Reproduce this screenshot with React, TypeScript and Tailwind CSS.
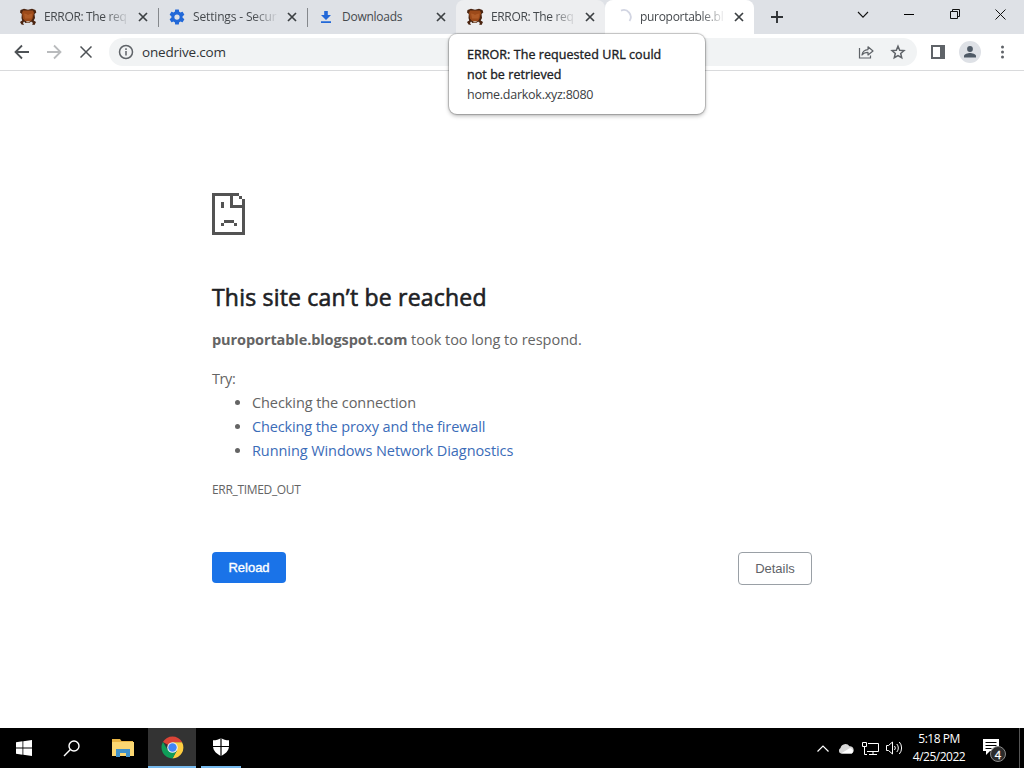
import { type ReactNode } from 'react';
import clsx from 'clsx';

interface Tab {
  title: string;
  icon: ReactNode;
  state?: 'hover' | 'active';
  separator?: boolean;
  fade?: boolean;
  titleClass: string;
}

const SquidIcon = () => (
  <svg width="18" height="18" viewBox="0 0 18 18">
    <path d="M1.500 2L5 .8l4 1 4-1L16.500 2l.8 2.500-1.800 1.500.5 4-1.300 2.500 2.300 1.500-1.500 3-2.500-.5 1-1.500-2-1.500-1.500 1.500h-4L5 13.500 4 15l1 2-2.500-.5-1.500-2.500 2.200-1.500L2.500 10l.3-4L1 4.500z" fill="#4a2410" />
    <path d="M4 2.500h10l1 2.500-1.500 5.500L12 13H6l-2-2.500L3 5z" fill="#9c4a1a" />
    <path d="M5 5.500l2.500.5L9 7l2-1 2.500-.5-1 5H6z" fill="#b05c28" />
    <path d="M7.300 13.800h3.400" stroke="#ead0ba" strokeWidth="1.200" />
  </svg>
);

const GearIcon = () => (
  <svg width="18" height="18" viewBox="0 0 24 24" fill="#2268d8">
    <path d="M19.430 12.980c.04-.32.07-.64.07-.98s-.03-.66-.07-.98l2.110-1.650c.19-.15.24-.42.12-.64l-2-3.460c-.12-.22-.39-.3-.61-.22l-2.490 1c-.52-.4-1.080-.73-1.690-.98l-.38-2.650C14.460 2.180 14.250 2 14 2h-4c-.25 0-.46.18-.49.42l-.38 2.650c-.61.25-1.170.59-1.690.98l-2.490-1c-.23-.09-.49 0-.61.22l-2 3.460c-.13.22-.07.49.12.64l2.110 1.650c-.04.32-.07.65-.07.98s.03.66.07.98l-2.110 1.650c-.19.15-.24.42-.12.64l2 3.460c.12.22.39.3.61.22l2.490-1c.52.4 1.080.73 1.690.98l.38 2.650c.03.24.24.42.49.42h4c.25 0 .46-.18.49-.42l.38-2.650c.61-.25 1.170-.59 1.690-.98l2.490 1c.23.09.49 0 .61-.22l2-3.460c.12-.22.07-.49-.12-.64zM12 15.500A3.500 3.500 0 1 1 12 8.500a3.500 3.500 0 0 1 0 7z" />
  </svg>
);

const DownloadIcon = () => (
  <svg width="18" height="18" viewBox="0 0 18 18" fill="#2268d8">
    <path d="M7.200 3h3.600v4h3.200l-5 5-5-5h3.200zM4 13.300h10v1.700H4z" />
  </svg>
);

const Spinner = () => (
  <svg width="18" height="18" viewBox="0 0 18 18" fill="none" stroke="#d2d5e2" strokeWidth="1.800">
    <path d="M6 2.600A7 7 0 0 1 14.500 13" />
  </svg>
);

const TABS: Tab[] = [
  { title: 'ERROR: The req', icon: <SquidIcon />, separator: true, fade: true, titleClass: 'tracking-[-0.35px]' },
  { title: 'Settings - Secur', icon: <GearIcon />, separator: true, fade: true, titleClass: 'tracking-[-0.15px]' },
  { title: 'Downloads', icon: <DownloadIcon />, titleClass: 'tracking-[-0.25px]' },
  { title: 'ERROR: The req', icon: <SquidIcon />, state: 'hover', fade: true, titleClass: 'tracking-[-0.35px]' },
  { title: 'puroportable.bl', icon: <Spinner />, state: 'active', fade: true, titleClass: 'tracking-[-0.3px]' },
];

const TabItem = ({ tab }: { tab: Tab }) => (
  <div
    className={clsx(
      'relative flex h-[34px] w-[149px] shrink-0 items-center pl-[10px] text-[#45494d]',
      tab.state === 'hover' && 'rounded-t-lg bg-[#edeef0]',
      tab.state === 'active' && 'rounded-t-lg bg-white'
    )}
  >
    <span className="flex w-[25px] shrink-0">{tab.icon}</span>
    <span
      className={clsx(
        'w-[85px] shrink-0 whitespace-nowrap text-[12px] leading-[18px]',
        tab.fade && '[mask-image:linear-gradient(to_right,#000_60px,transparent_86px)]',
        tab.titleClass
      )}
    >
      {tab.title}
    </span>
    <svg className="ml-[9px] shrink-0" width="10" height="10" viewBox="0 0 10 10" stroke="#3c4043" strokeWidth="1.700">
      <path d="M1 1l8 8M9 1l-8 8" />
    </svg>
    {tab.separator && <span className="absolute -right-px top-[8px] h-[19px] w-px bg-[#85888c]" />}
  </div>
);

const TabStrip = () => (
  <div className="flex h-[34px] bg-[#dee1e6] pl-[9px]">
    {TABS.map((tab, i) => (
      <TabItem key={i} tab={tab} />
    ))}
    <div className="flex w-[46px] items-center justify-center">
      <svg width="12" height="12" viewBox="0 0 12 12" stroke="#2f3235" strokeWidth="1.900">
        <path d="M6 0v12M0 6h12" />
      </svg>
    </div>
    <div className="ml-auto flex h-[29px] shrink-0 text-[#111]">
      <div className="flex w-[46px] items-center justify-center">
        <svg width="12" height="8" viewBox="0 0 12 8" fill="none" stroke="currentColor" strokeWidth="1.100">
          <path d="M1 1l5 5.200L11 1" />
        </svg>
      </div>
      <div className="flex w-[46px] items-center justify-center">
        <span className="h-px w-[10px] bg-black" />
      </div>
      <div className="flex w-[46px] items-center justify-center pr-px">
        <svg width="10" height="11" viewBox="0 0 10 11" fill="none" stroke="currentColor">
          <path d="M.5 2.500h7v7h-7zM2.500 2.500v-2h7v7h-2" />
        </svg>
      </div>
      <div className="flex w-[46px] items-center justify-center pr-px pb-px">
        <svg width="11" height="11" viewBox="0 0 11 11" stroke="currentColor">
          <path d="M.5.5l10 10M10.500.5l-10 10" />
        </svg>
      </div>
    </div>
  </div>
);

const Toolbar = () => (
  <div className="flex h-[37px] items-center border-b border-[#d9dadc] bg-white text-[#5f6368]">
    <svg className="ml-[14px]" width="16" height="16" viewBox="0 0 16 16" fill="none" stroke="#4e5256" strokeWidth="1.800">
      <path d="M15 8H2M8 1.500L1.500 8 8 14.500" />
    </svg>
    <svg className="ml-[16px]" width="16" height="16" viewBox="0 0 16 16" fill="none" stroke="#b9bbbd" strokeWidth="1.800">
      <path d="M1 8h13M8 1.500L14.500 8 8 14.500" />
    </svg>
    <svg className="ml-[18px]" width="12" height="12" viewBox="0 0 12 12" stroke="#4e5256" strokeWidth="1.500">
      <path d="M.5.5l11 11M11.500.5l-11 11" />
    </svg>
    <div className="ml-[17px] flex h-[28px] w-[808px] items-center rounded-full bg-[#f1f3f4] pl-[9px] pr-[11px]">
      <svg width="16" height="16" viewBox="0 0 16 16" fill="none" stroke="#5f6368" strokeWidth="1.500">
        <circle cx="8" cy="8" r="6.500" />
        <path d="M8 7v4.500M8 4.300v1.600" />
      </svg>
      <span className="ml-[8px] text-[13.500px] leading-5 tracking-[-0.2px] text-[#303437]">onedrive.com</span>
      <svg className="ml-auto" width="16" height="16" viewBox="0 0 16 16" fill="none" stroke="#5f6368" strokeWidth="1.200">
        <path d="M1.500 4v10h11v-2.500" />
        <path d="M4 11c.5-3.500 2.500-5.200 6-5.400V2.800L15 7l-5 4V8.400c-2.600 0-4.500.7-6 2.600z" strokeLinejoin="round" />
      </svg>
      <svg className="ml-[16px]" width="16" height="16" viewBox="0 0 16 16" fill="none" stroke="#5f6368" strokeWidth="1.500">
        <path d="M8 2.200l1.700 4 4.300.4-3.300 2.900 1 4.200L8 11.500l-3.700 2.200 1-4.200L2 6.600l4.300-.4z" />
      </svg>
    </div>
    <svg className="ml-[14px]" width="14" height="14" viewBox="0 0 14 14">
      <path fill="#5f6368" fillRule="evenodd" d="M0 0h14v14H0zM2 2v10h7V2z" />
    </svg>
    <span className="ml-[14px] flex size-[22px] items-center justify-center rounded-full bg-[#dee1e6]">
      <svg width="12" height="12" viewBox="0 0 12 12" fill="#4f5a66">
        <circle cx="6" cy="3" r="2.900" />
        <path d="M0 11.500V10c0-2 4-3 6-3s6 1 6 3v1.500z" />
      </svg>
    </span>
    <svg className="ml-[20px]" width="4" height="14" viewBox="0 0 4 14" fill="#5f6368">
      <circle cx="1.500" cy="2" r="1.500" />
      <circle cx="1.500" cy="7" r="1.500" />
      <circle cx="1.500" cy="12" r="1.500" />
    </svg>
  </div>
);

const TabTooltip = () => (
  <div className="absolute left-[449px] top-[34px] h-[80px] w-[256px] rounded-lg bg-white pl-[18px] pt-[11px] text-[12.500px] leading-[20px] text-[#202124] shadow-[0_0_1px_1px_rgba(0,0,0,0.22),0_2px_4px_rgba(0,0,0,0.28)]">
    <p className="tracking-[0.06px] [-webkit-text-stroke:0.35px_#202124]">
      ERROR: The requested URL could
      <br />
      not be retrieved
    </p>
    <p className="tracking-[-0.25px] text-[#3c4043]">home.darkok.xyz:8080</p>
  </div>
);

const ErrorPage = () => (
  <main className="h-[657px] pl-[212px] pt-[122px] text-[14.500px] leading-6 text-[#646464]">
    <svg width="33" height="42" viewBox="0 0 33 42" fill="#535353" shapeRendering="crispEdges">
      <path d="M0 0h27v3H3v36h27V15H18V3h3v9h9V6h3v36H0zM27 3h3v3h-3zM9 9h3v6H9zM12 27h10v3H12zM9 30h3v3H9zM22 30h3v3h-3z" />
    </svg>
    <h1 className="mt-[47px] text-[23px] leading-[30px] tracking-[0.2px] text-[#202124] [-webkit-text-stroke:0.6px_#202124]">
      This site can’t be reached
    </h1>
    <p className="mt-[16px] tracking-[-0.02px]">
      <strong className="font-bold tracking-[-0.09px]">puroportable.blogspot.com</strong> took too long to respond.
    </p>
    <p className="mt-[15px] tracking-[-0.4px]">Try:</p>
    <ul className="list-disc pl-[40px]">
      <li className="tracking-[-0.08px]">Checking the connection</li>
      <li className="tracking-[-0.13px]">
        <a className="text-[#3b6cb8]">Checking the proxy and the firewall</a>
      </li>
      <li className="tracking-[-0.08px]">
        <a className="text-[#3b6cb8]">Running Windows Network Diagnostics</a>
      </li>
    </ul>
    <p className="mt-[15px] text-[12px] tracking-[-0.33px]">ERR_TIMED_OUT</p>
    <div className="mt-[50px] flex w-[600px] items-start justify-between font-['Liberation_Sans',sans-serif] text-[13px]">
      <button className="h-[31px] w-[74px] rounded bg-[#1a73e8] text-white [-webkit-text-stroke:0.35px_#fff]">Reload</button>
      <button className="h-[33px] w-[74px] rounded border border-[#9aa0a6] text-[#5f6368]">Details</button>
    </div>
  </main>
);

const Taskbar = () => (
  <footer className="flex h-10 items-center bg-black text-white">
    <div className="flex w-12 justify-center">
      <svg width="16" height="16" viewBox="0 0 16 16" fill="#fff">
        <path d="M0 2.200l6.500-.9v6.200H0zM7.300 1.200L16 0v7.500H7.300zM0 8.400h6.500v6.300L0 13.800zM7.300 8.400H16V16l-8.700-1.200z" />
      </svg>
    </div>
    <div className="flex w-12 justify-center pr-px">
      <svg width="17" height="17" viewBox="0 0 17 17" fill="none" stroke="#fff" strokeWidth="1.400">
        <circle cx="11" cy="6" r="5" />
        <path d="M7.400 9.600L1 16" />
      </svg>
    </div>
    <div className="flex w-[52px] justify-center pl-[2px]">
      <svg width="22" height="18" viewBox="0 0 22 18">
        <path d="M0 0h8l1.500 2H21v15H0z" fill="#e9b544" />
        <path d="M0 3h22v14H0z" fill="#fbd772" />
        <path d="M4 10h14v8h-4v-4H8v4H4z" fill="#4091c9" />
      </svg>
    </div>
    <div className="flex h-10 w-12 items-center justify-center border-b-2 border-[#76b9ed] bg-[#333]">
      <svg width="23" height="23" viewBox="0 0 48 48">
        <path d="M24 24L4.100 12.500A23 23 0 0 1 43.900 12.500L24 13z" fill="#db4437" />
        <path d="M24 13h19.900A23 23 0 0 1 24 47l9.500-17.500z" fill="#ffcd40" />
        <path d="M4.100 12.500A23 23 0 0 0 24 47l9.500-17.500L24 24l-9.500 5.500z" fill="#0f9d58" />
        <circle cx="24" cy="24" r="11" fill="#f1f1f1" />
        <circle cx="24" cy="24" r="8.800" fill="#4285f4" />
      </svg>
    </div>
    <div className="ml-[5px] flex h-10 w-10 items-center justify-center border-b-2 border-[#76b9ed]">
      <svg width="18" height="18" viewBox="0 0 18 18">
        <path d="M9 0c2 1.700 5 2.300 8 2.300V8c0 5-4 8-8 10-4-2-8-5-8-10V2.300C4 2.300 7 1.700 9 0z" fill="#fff" />
        <path d="M9 0v18M1 8.500h16" stroke="#000" strokeWidth="1.200" />
      </svg>
    </div>
    <div className="ml-auto flex items-center">
      <svg width="12" height="7" viewBox="0 0 12 7" fill="none" stroke="#fff" strokeWidth="1.200">
        <path d="M.5 6.500L6 1l5.500 5.500" />
      </svg>
      <svg className="ml-[9px]" width="17" height="11" viewBox="0 0 17 11">
        <path d="M3 10.500a3 3 0 0 1-.5-5.500A5 5 0 0 1 11.500 3.300 3.800 3.800 0 0 1 13.500 10.500z" fill="#d8d8d8" />
        <path d="M3 10.500l9-5.500a3.300 3.300 0 0 1 2 5.500z" fill="#fff" />
      </svg>
      <svg className="ml-[7px]" width="17" height="15" viewBox="0 0 17 15" fill="none" stroke="#fff">
        <path d="M6 2.500h10.500v8H5M11 10.500v3M7 13.500h8M.5 1.500h4v4h-4zM2.500 5.500v8H5" />
      </svg>
      <svg className="ml-[7px]" width="17" height="14" viewBox="0 0 17 14" fill="none" stroke="#fff">
        <path d="M.5 4.500h2l4-3.500v12l-4-3.500h-2z" />
        <path d="M8.500 5a3 3 0 0 1 0 4M10.800 3a6 6 0 0 1 0 8M13.300 1a9 9 0 0 1 0 12" />
      </svg>
      <div className="ml-[5px] w-[62px] text-center text-[12px] leading-[18px] tracking-[-0.5px]">
        <div>5:18 PM</div>
        <div className="whitespace-nowrap">4/25/2022</div>
      </div>
      <div className="relative ml-[12px] h-6 w-6">
        <svg width="24" height="24" viewBox="0 0 24 24">
          <path d="M1 3h16v12H8l-4 4v-4H1z" fill="#fff" />
          <path d="M3.500 6.500h11M3.500 9.500h11M3.500 12.500h6" stroke="#000" />
        </svg>
        <span className="absolute left-[8px] top-[10px] flex size-[16px] items-center justify-center rounded-full border border-[#8a8a8a] bg-[#2b2b2b] text-[11px] leading-none [-webkit-text-stroke:0.3px_#fff]">
          4
        </span>
      </div>
      <span className="ml-[13px] h-10 w-px bg-[#555]" />
      <span className="w-[4px]" />
    </div>
  </footer>
);

export default function App() {
  return (
    <div className="relative h-[768px] w-[1024px] overflow-hidden bg-white font-['Open_Sans','Noto_Sans',sans-serif]">
      <TabStrip />
      <Toolbar />
      <ErrorPage />
      <Taskbar />
      <TabTooltip />
    </div>
  );
}
